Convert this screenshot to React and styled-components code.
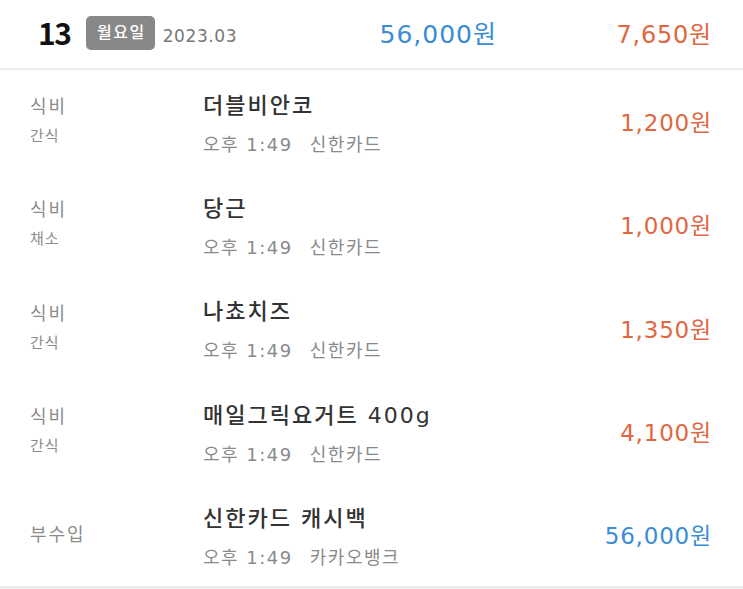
import styled, { createGlobalStyle } from "styled-components";

const items = [
  { cat: "식비", sub: "간식", title: "더블비안코", time: "오후 1:49", method: "신한카드", amount: "1,200원", income: false },
  { cat: "식비", sub: "채소", title: "당근", time: "오후 1:49", method: "신한카드", amount: "1,000원", income: false },
  { cat: "식비", sub: "간식", title: "나쵸치즈", time: "오후 1:49", method: "신한카드", amount: "1,350원", income: false },
  { cat: "식비", sub: "간식", title: "매일그릭요거트 400g", time: "오후 1:49", method: "신한카드", amount: "4,100원", income: false },
  { cat: "부수입", sub: null, title: "신한카드 캐시백", time: "오후 1:49", method: "카카오뱅크", amount: "56,000원", income: true },
];

function App() {
  return (
    <>
      <GlobalStyle />
      <Page>
        <Header>
          <DayGroup>
            <DayNum>13</DayNum>
            <DayBadge>월요일</DayBadge>
            <MonthText>2023.03</MonthText>
          </DayGroup>
          <HeaderIncome>56,000원</HeaderIncome>
          <HeaderExpense>7,650원</HeaderExpense>
        </Header>
        <List>
          {items.map((item, i) => (
            <Row key={i}>
              <CatCol>
                <CatMain>{item.cat}</CatMain>
                {item.sub && <CatSub>{item.sub}</CatSub>}
              </CatCol>
              <InfoCol>
                <Title>{item.title}</Title>
                <Meta>
                  <span>{item.time}</span>
                  <span>{item.method}</span>
                </Meta>
              </InfoCol>
              <Amount $income={item.income}>{item.amount}</Amount>
            </Row>
          ))}
        </List>
        <BottomBar />
      </Page>
    </>
  );
}

export default App;

const GlobalStyle = createGlobalStyle`
  body {
    margin: 0;
    background: #fff;
    font-family: "DejaVu Sans", "Noto Sans CJK KR", sans-serif;
  }
`;

const Page = styled.div`
  width: 743px;
  height: 589px;
  display: flex;
  flex-direction: column;
  background: #fff;
  overflow: hidden;
`;

const Header = styled.div`
  height: 68px;
  display: flex;
  align-items: center;
  padding: 0 31px 0 38px;
  border-bottom: 2px solid #eeeeee;
`;

const DayGroup = styled.div`
  display: flex;
  align-items: center;
  flex: 1;
`;

const DayNum = styled.div`
  font-family: "Noto Sans CJK KR", sans-serif;
  font-size: 30px;
  font-weight: 700;
  color: #111;
  letter-spacing: -1.5px;
  width: 48px;
  line-height: 34px;
  margin-top: -4px;
`;

const DayBadge = styled.div`
  background: #888888;
  color: #fff;
  font-size: 16px;
  font-weight: 500;
  letter-spacing: 1.5px;
  border-radius: 5px;
  padding: 0 9px 0 11px;
  height: 34px;
  line-height: 34px;
  margin-top: -2px;
`;

const MonthText = styled.div`
  margin-left: 8px;
  margin-top: 4px;
  font-size: 17px;
  letter-spacing: 0.6px;
  color: #777;
  line-height: 24px;
`;

const HeaderIncome = styled.div`
  width: 200px;
  text-align: right;
  font-size: 25px;
  letter-spacing: 1px;
  color: #3a8cd6;
  line-height: 34px;
  padding-top: 2px;
`;

const HeaderExpense = styled.div`
  width: 215px;
  text-align: right;
  font-size: 24px;
  letter-spacing: 0.8px;
  color: #e0673f;
  line-height: 34px;
  padding-top: 2px;
`;

const List = styled.div`
  display: flex;
  flex-direction: column;
`;

const Row = styled.div`
  height: 103.3px;
  display: flex;
  align-items: center;
  padding: 0 31px 0 30px;
`;

const CatCol = styled.div`
  width: 173px;
  display: flex;
  flex-direction: column;
  justify-content: center;
  gap: 1px;
`;

const CatMain = styled.div`
  font-size: 18px;
  line-height: 28px;
  letter-spacing: 2px;
  color: #8c8c8c;
`;

const CatSub = styled.div`
  font-size: 15px;
  line-height: 28px;
  letter-spacing: 1px;
  color: #8c8c8c;
`;

const InfoCol = styled.div`
  flex: 1;
  display: flex;
  flex-direction: column;
  padding-top: 7px;
`;

const Title = styled.div`
  font-size: 22px;
  font-weight: 500;
  line-height: 30px;
  letter-spacing: 2px;
  color: #333;
`;

const Meta = styled.div`
  margin-top: 9px;
  display: flex;
  gap: 17px;
  font-size: 18px;
  line-height: 30px;
  letter-spacing: 1.5px;
  color: #8a8a8a;
`;

const Amount = styled.div`
  font-size: 23px;
  line-height: 30px;
  letter-spacing: 0.8px;
  padding-top: 3px;
  color: ${(p) => (p.$income ? "#3a8cd6" : "#e0673f")};
`;

const BottomBar = styled.div`
  flex: 1;
  border-top: 2px solid #ececec;
  background: #f2f2f2;
`;
